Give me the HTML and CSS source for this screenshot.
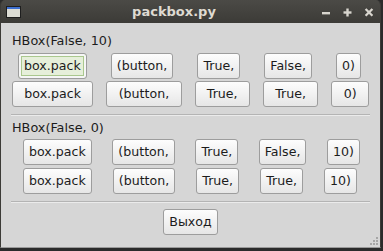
FILE: index.html
```html
<!DOCTYPE html>
<html lang="en">
<head>
    <meta charset="UTF-8">
    <title>packbox.py</title>
    <link rel="stylesheet" href="styles.css">
</head>
<body>
    <div class="window">
        <header class="titlebar">
            <svg class="win-icon" width="15" height="12" viewBox="0 0 15 12">
                <rect x="0.5" y="0.5" width="14" height="11" fill="#dcdcd4" stroke="#1e1e1e"/>
                <rect x="1" y="1" width="13" height="2" fill="#3d6fd0"/>
            </svg>
            <span class="title">packbox.py</span>
            <svg class="controls" width="60" height="23" viewBox="0 0 60 23">
                <rect x="4" y="12" width="8" height="2.4" fill="#d8d5ce"/>
                <rect x="25.5" y="11.3" width="8" height="2.4" fill="#d8d5ce"/>
                <rect x="28.3" y="8.5" width="2.4" height="8" fill="#d8d5ce"/>
                <path d="M47.6 9 L54.4 15.8 M54.4 9 L47.6 15.8" stroke="#d8d5ce" stroke-width="2.3" fill="none"/>
            </svg>
        </header>

        <main class="content">
            <div class="box-label">HBox(False, 10)</div>
            <div class="row row-a">
                <button class="btn focus">box.pack</button>
                <button class="btn">(button,</button>
                <button class="btn">True,</button>
                <button class="btn">False,</button>
                <button class="btn">0)</button>
            </div>
            <div class="row row-fill">
                <button class="btn">box.pack</button>
                <button class="btn">(button,</button>
                <button class="btn">True,</button>
                <button class="btn">True,</button>
                <button class="btn">0)</button>
            </div>

            <hr class="sep">

            <div class="box-label label-2">HBox(False, 0)</div>
            <div class="row row-c">
                <button class="btn">box.pack</button>
                <button class="btn">(button,</button>
                <button class="btn">True,</button>
                <button class="btn">False,</button>
                <button class="btn">10)</button>
            </div>
            <div class="row row-d">
                <button class="btn">box.pack</button>
                <button class="btn">(button,</button>
                <button class="btn">True,</button>
                <button class="btn">True,</button>
                <button class="btn">10)</button>
            </div>

            <hr class="sep">

            <div class="quit-row">
                <button class="btn">Выход</button>
            </div>

            <svg class="grip" width="10" height="10" viewBox="0 0 10 10">
                <g fill="#a6a6a6">
                    <rect x="7" y="1" width="2" height="2"/>
                    <rect x="4" y="4" width="2" height="2"/>
                    <rect x="7" y="4" width="2" height="2"/>
                    <rect x="1" y="7" width="2" height="2"/>
                    <rect x="4" y="7" width="2" height="2"/>
                    <rect x="7" y="7" width="2" height="2"/>
                </g>
            </svg>
        </main>
    </div>
</body>
</html>
```

FILE: styles.css
```css
body {
    margin: 0;
    padding: 0;
    background-color: #2b2b2b;
    font-family: "DejaVu Sans", sans-serif;
}

.window {
    width: 379px;
    border-left: 1px solid #3c3b37;
    border-right: 1px solid #3c3b37;
    border-bottom: 1px solid #9a9a9a;
    border-radius: 5px 5px 0 0;
    overflow: hidden;
}

.titlebar {
    display: flex;
    align-items: center;
    height: 23px;
    background: linear-gradient(#4b4a46, #3c3b37);
}

.win-icon {
    margin-left: 5px;
    flex: none;
}

.title {
    flex: 1;
    padding-left: 9px;
    text-align: center;
    font-size: 13px;
    font-weight: bold;
    line-height: 23px;
    color: #dfdbd2;
}

.controls {
    flex: none;
    margin-right: 2px;
}

.content {
    position: relative;
    height: 224px;
    box-sizing: border-box;
    padding-top: 10px;
    background-color: #d6d6d6;
    color: #1c1c1c;
}

.box-label {
    padding-left: 11px;
    font-size: 12.8px;
    line-height: 16px;
}

.label-2 {
    margin-top: 4px;
}

.row {
    display: flex;
    justify-content: space-between;
}

.row-a {
    margin-top: 4px;
    padding: 0 19px 0 17px;
}

.row-fill {
    margin-top: 2px;
    padding: 0 11px 0 11px;
    gap: 13px;
}

.row-fill .btn {
    flex: 1 1 auto;
}

.row-c {
    margin-top: 3px;
    padding: 0 20px 0 22px;
}

.row-d {
    margin-top: 3px;
    padding: 0 23px 0 22px;
}

.btn {
    box-sizing: border-box;
    height: 26px;
    margin: 0;
    padding: 0 5px;
    border: 1px solid #9d9d9d;
    border-radius: 3px;
    background: linear-gradient(#fdfdfd, #e6e6e6);
    font-family: "DejaVu Sans", sans-serif;
    font-size: 12.6px;
    line-height: 16px;
    color: #1c1c1c;
}

.btn.focus {
    background: #e6efda;
    box-shadow: inset 0 0 0 2px #f6f6f6, inset 0 0 0 3px #aac88e;
}

.sep {
    height: 0;
    margin: 7px 10px 0 10px;
    border: 0;
    border-top: 1px solid #b4b4b4;
    border-bottom: 1px solid #ebebeb;
}

.quit-row {
    display: flex;
    justify-content: center;
    margin-top: 6px;
}

.grip {
    position: absolute;
    right: 1px;
    bottom: 1px;
}
```
